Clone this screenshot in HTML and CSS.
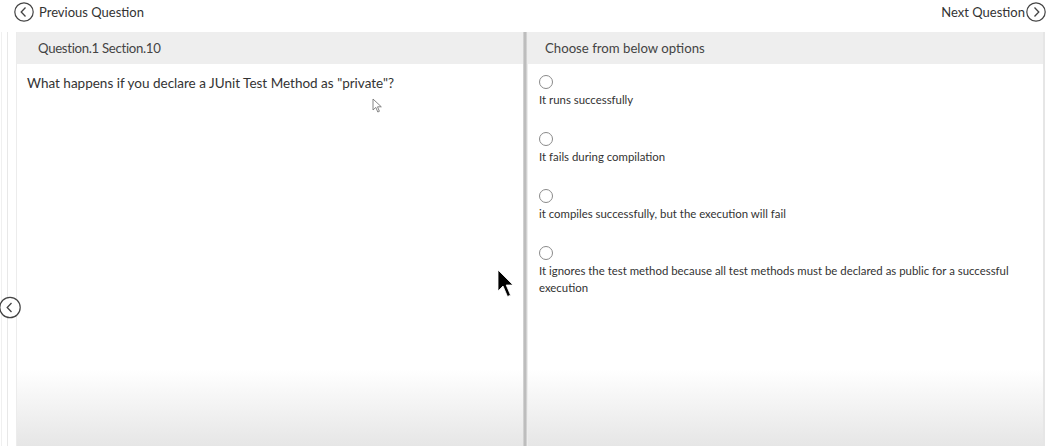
FILE: index.html
```html
<!DOCTYPE html>
<html>
<head>
<meta charset="utf-8">
<link rel="stylesheet" href="styles.css">
</head>
<body>
<div class="page">
  <div class="topbar">
    <a class="nav prev"><span class="circ"><svg width="20" height="20" viewBox="0 0 20 20"><circle cx="10" cy="10" r="9.2" fill="none" stroke="#444" stroke-width="1.2"/><path d="M11.5 5.5 L7.2 10 L11.5 14.5" fill="none" stroke="#444" stroke-width="1.3"/></svg></span><span>Previous Question</span></a>
    <a class="nav next"><span>Next Question</span><span class="circ"><svg width="20" height="20" viewBox="0 0 20 20"><circle cx="10" cy="10" r="9.2" fill="none" stroke="#444" stroke-width="1.2"/><path d="M8.5 5.5 L12.8 10 L8.5 14.5" fill="none" stroke="#444" stroke-width="1.3"/></svg></span></a>
  </div>
  <div class="main">
    <div class="gutter">
      <span class="side-btn"><svg width="21" height="23" viewBox="0 0 21 23"><circle cx="10" cy="11.5" r="10.2" fill="#fff" stroke="#444" stroke-width="1.2"/><path d="M11.5 7 L7.2 11.5 L11.5 16" fill="none" stroke="#444" stroke-width="1.3"/></svg></span>
    </div>
    <section class="panel left">
      <div class="head">Question.1 Section.10</div>
      <div class="body">
        <p class="question">What happens if you declare a JUnit Test Method as "private"?</p>
      </div>
    </section>
    <div class="divider"></div>
    <section class="panel right">
      <div class="head">Choose from below options</div>
      <div class="body options">
        <label class="opt"><span class="radio"></span><span class="txt">It runs successfully</span></label>
        <label class="opt"><span class="radio"></span><span class="txt">It fails during compilation</span></label>
        <label class="opt"><span class="radio"></span><span class="txt">it compiles successfully, but the execution will fail</span></label>
        <label class="opt"><span class="radio"></span><span class="txt">It ignores the test method because all test methods must be declared as public for a successful execution</span></label>
      </div>
    </section>
  </div>
  <svg class="cursor-small" width="12" height="16" viewBox="0 0 12 16"><path d="M1 1 L1 12 L3.8 9.4 L5.8 14 L7.4 13.3 L5.5 8.8 L9.3 8.8 Z" fill="#fff" stroke="#777" stroke-width="0.9"/></svg>
  <svg class="cursor-big" width="20" height="30" viewBox="0 0 20 30"><path d="M1 1 L1 22 L6 17 L10.5 27.5 L13.5 26.2 L9.2 16 L16 16 Z" fill="#000" stroke="#fff" stroke-width="0.8"/></svg>
</div>
</body>
</html>
```
FILE: styles.css
```css
html, body {
  margin: 0;
  padding: 0;
  background: #fff;
}
body {
  font-family: Lato, "Noto Sans", sans-serif;
  color: #333;
}
.page {
  position: relative;
  width: 1046px;
  height: 446px;
  overflow: hidden;
  display: flex;
  flex-direction: column;
}
.topbar {
  height: 32px;
  display: flex;
  justify-content: space-between;
  align-items: flex-start;
  padding: 2px 0 0 14px;
  box-sizing: border-box;
}
.nav {
  display: flex;
  align-items: center;
  gap: 5px;
  font-size: 13px;
  color: #333;
  height: 20px;
}
.nav.next {
  gap: 1px;
}
.circ {
  display: flex;
  width: 20px;
  height: 20px;
}
.main {
  flex: 1;
  display: flex;
  min-height: 0;
}
.gutter {
  width: 16px;
  flex: none;
  position: relative;
  box-sizing: border-box;
  border-left: 1px solid #f0f0f0;
  margin-left: 1px;
  background: linear-gradient(to right, #fff 0, #fff 5px, #e8e8e8 5px, #e8e8e8 6px, #fff 6px, #fff 14px, #ececec 14px);
}
.side-btn {
  position: absolute;
  left: -2px;
  top: 264px;
  display: flex;
}
.panel {
  display: flex;
  flex-direction: column;
  min-width: 0;
}
.panel.left {
  width: 506px;
  flex: none;
}
.panel.right {
  flex: 1;
  border-right: 2px solid #e6e6e6;
  margin-right: 1px;
}
.head {
  height: 32px;
  background: #eeeeee;
  font-size: 13.2px;
  color: #444;
  display: flex;
  align-items: center;
  flex: none;
}
.left .head {
  padding-left: 21px;
  letter-spacing: -0.3px;
}
.right .head {
  padding-left: 17px;
}
.body {
  flex: 1;
  background: linear-gradient(to bottom, #fff 0, #fff 305px, #e6e6e6 100%);
}
.question {
  margin: 0;
  padding: 10px 0 0 10px;
  font-size: 13.5px;
  line-height: 18px;
  color: #333;
}
.divider {
  width: 5px;
  flex: none;
  background: linear-gradient(to right, #e4e4e4 0, #bdbdbd 1px, #bdbdbd 3px, #e6e6e6 4px, #f4f4f4 5px);
}
.options {
  padding: 11px 10px 0 11px;
  display: flex;
  flex-direction: column;
  gap: 24px;
}
.opt {
  display: flex;
  flex-direction: column;
  align-items: flex-start;
  gap: 2px;
}
.radio {
  width: 12px;
  height: 12px;
  border: 1px solid #8a8a8a;
  border-radius: 50%;
  background: #fff;
}
.txt {
  font-size: 11.4px;
  line-height: 17px;
  color: #333;
}
.cursor-small {
  position: absolute;
  left: 372px;
  top: 98px;
}
.cursor-big {
  position: absolute;
  left: 497px;
  top: 269px;
}
```
